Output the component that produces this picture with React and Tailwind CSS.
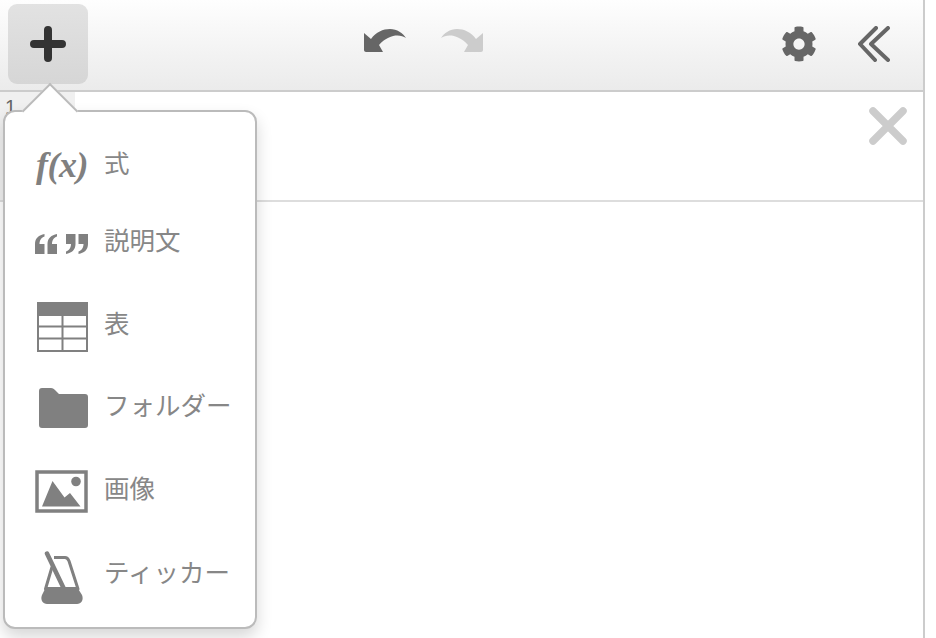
import { FaCog } from 'react-icons/fa';

const FxIcon = () => (
  <span className="mt-[-1px] block w-[54px] text-center font-['Liberation_Serif',serif] text-[36px] leading-none font-bold italic tracking-[-0.5px] text-[#808080]">
    f(x)
  </span>
);

const QuoteIcon = () => {
  const open = 'M0 20V10C0 4 4 1 9.5 0V2.5C6 3.5 4.5 7 4.5 10H9.5V20Z';
  const close = 'M9.5 0V10C9.5 16 5.5 19 0 20V17.5C3.5 16.5 5 13 5 10H0V0Z';
  return (
    <svg width="53" height="20" viewBox="0 0 53 20" fill="#808080" className="-ml-[1px] mt-[4px]">
      <path d={open} />
      <path d={open} transform="translate(12.5 0)" />
      <path d={close} transform="translate(31 0)" />
      <path d={close} transform="translate(43.5 0)" />
    </svg>
  );
};

const TableIcon = () => (
  <svg width="51" height="50" viewBox="0 0 51 50" className="ml-[1px] mt-[4px]">
    <rect x="1" y="1" width="49" height="48" fill="none" stroke="#808080" strokeWidth="2" />
    <rect x="0" y="0" width="51" height="14" fill="#808080" />
    <path d="M25.5 14V49M1 24.5H50M1 36.5H50" stroke="#808080" strokeWidth="2" />
  </svg>
);

const FolderIcon = () => (
  <svg width="49" height="40" viewBox="0 0 49 40" fill="#808080" className="ml-[3px] mt-[2px]">
    <path d="M3 0H12C14 0 15 1 16.5 2.5L20 6H46C48 6 49 7 49 9V37C49 39 48 40 46 40H3C1 40 0 39 0 37V3C0 1 1 0 3 0Z" />
  </svg>
);

const ImageIcon = () => (
  <svg width="53" height="43" viewBox="0 0 53 43" className="-ml-[1px] mt-[2px]">
    <rect x="2" y="2" width="49" height="39" fill="none" stroke="#808080" strokeWidth="3.5" />
    <circle cx="41" cy="11.5" r="4.8" fill="#808080" />
    <path d="M7 36.5L17.5 11L29.5 27.5L35 23L45.5 36.5Z" fill="#808080" />
  </svg>
);

const MetronomeIcon = () => (
  <svg width="44" height="54" viewBox="0 0 44 54" className="ml-[4px] mt-[7px]">
    <path d="M14 6.5H25C27 6.5 28 7.5 29 10L38 38H5.5L12 16" fill="none" stroke="#808080" strokeWidth="3" strokeLinejoin="round" />
    <path d="M6 36H37L42 44C44 49 41 53 37 53H7C3 53 0 49 2 44Z" fill="#808080" />
    <path d="M7 2.5L24 38" fill="none" stroke="#808080" strokeWidth="4.5" strokeLinecap="round" />
  </svg>
);

const items = [
  { label: '式', Icon: FxIcon, height: 'h-[78px]' },
  { label: '説明文', Icon: QuoteIcon, height: 'h-[76px]' },
  { label: '表', Icon: TableIcon, height: 'h-[90px]' },
  { label: 'フォルダー', Icon: FolderIcon, height: 'h-[74px]' },
  { label: '画像', Icon: ImageIcon, height: 'h-[92px]' },
  { label: 'ティッカー', Icon: MetronomeIcon, height: 'h-[76px]' },
];

function AddMenu() {
  return (
    <div className="absolute left-[3px] top-[110px] h-[519px] w-[254px] rounded-[12px] border-2 border-[#bbbbbb] bg-white pt-[14px] shadow-[0_8px_16px_rgba(0,0,0,0.16)]">
      {/* arrow pointing at the add button */}
      <div className="absolute left-[25px] top-[-21px] h-[40px] w-[40px] rotate-45 border-l-2 border-t-2 border-[#bbbbbb] bg-white" />
      {items.map(({ label, Icon, height }) => (
        <div key={label} className={`relative flex items-center pl-[31px] ${height}`}>
          <div className="flex w-[52px] shrink-0 items-center">
            <Icon />
          </div>
          <span className="ml-[16px] whitespace-nowrap text-[25.5px] leading-none text-[#878787]">{label}</span>
        </div>
      ))}
    </div>
  );
}

export default function App() {
  return (
    <div className="relative h-[638px] w-[936px] overflow-hidden bg-white font-['Liberation_Sans','Noto_Sans_CJK_JP',sans-serif]">
      <div className="h-full w-[925px] border-r-2 border-[#cccccc]">
        <div className="flex h-[92px] items-start border-b-2 border-[#cccccc] bg-gradient-to-b from-[#fefefe] to-[#ebebeb]">
          <button className="ml-[8px] mt-[4px] flex h-[80px] w-[80px] items-center justify-center rounded-[9px] bg-gradient-to-b from-[#e2e2e2] to-[#d6d6d6]">
            <svg width="36" height="36" viewBox="0 0 36 36">
              <path d="M18 4V32M4 18H32" stroke="#333333" strokeWidth="8" strokeLinecap="round" />
            </svg>
          </button>

          <div className="ml-[276px] mt-[29px] flex gap-[33px]">
            <svg width="43" height="24" viewBox="0 0 43 24" fill="#666666">
              <path d="M0 4L7 10C12 3 19 0 26 0C33 0 39 4 42 9C36 5 25 5 15 16L19 23H2C1 23 0 22 0 21Z" />
            </svg>
            <svg width="43" height="24" viewBox="0 0 43 24" fill="#cccccc">
              <path d="M43 4L36 10C31 3 24 0 17 0C10 0 4 4 1 9C7 5 18 5 28 16L24 23H41C42 23 43 22 43 21Z" />
            </svg>
          </div>

          <FaCog className="ml-[298px] mt-[26px] text-[36px] text-[#666666]" />

          <svg width="34" height="36" viewBox="0 0 34 36" className="ml-[40px] mt-[26px]" fill="none" stroke="#666666" strokeWidth="4" strokeLinecap="round" strokeLinejoin="round">
            <path d="M19 2L3 18L18 34M31 2L14 18L31 34" />
          </svg>
        </div>

        <div className="flex h-[110px] items-start border-b-2 border-[#dddddd]">
          <div className="h-full w-[75px] bg-[#f0f0f0] pl-[5px] pt-[5px] text-[20px] leading-none text-[#666666]">1</div>
          <svg width="38" height="38" viewBox="0 0 38 38" className="ml-[794px] mt-[15px]" fill="none" stroke="#cccccc" strokeWidth="7.5" strokeLinecap="round">
            <path d="M4 4L34 34M34 4L4 34" />
          </svg>
        </div>
      </div>

      <AddMenu />
    </div>
  );
}
